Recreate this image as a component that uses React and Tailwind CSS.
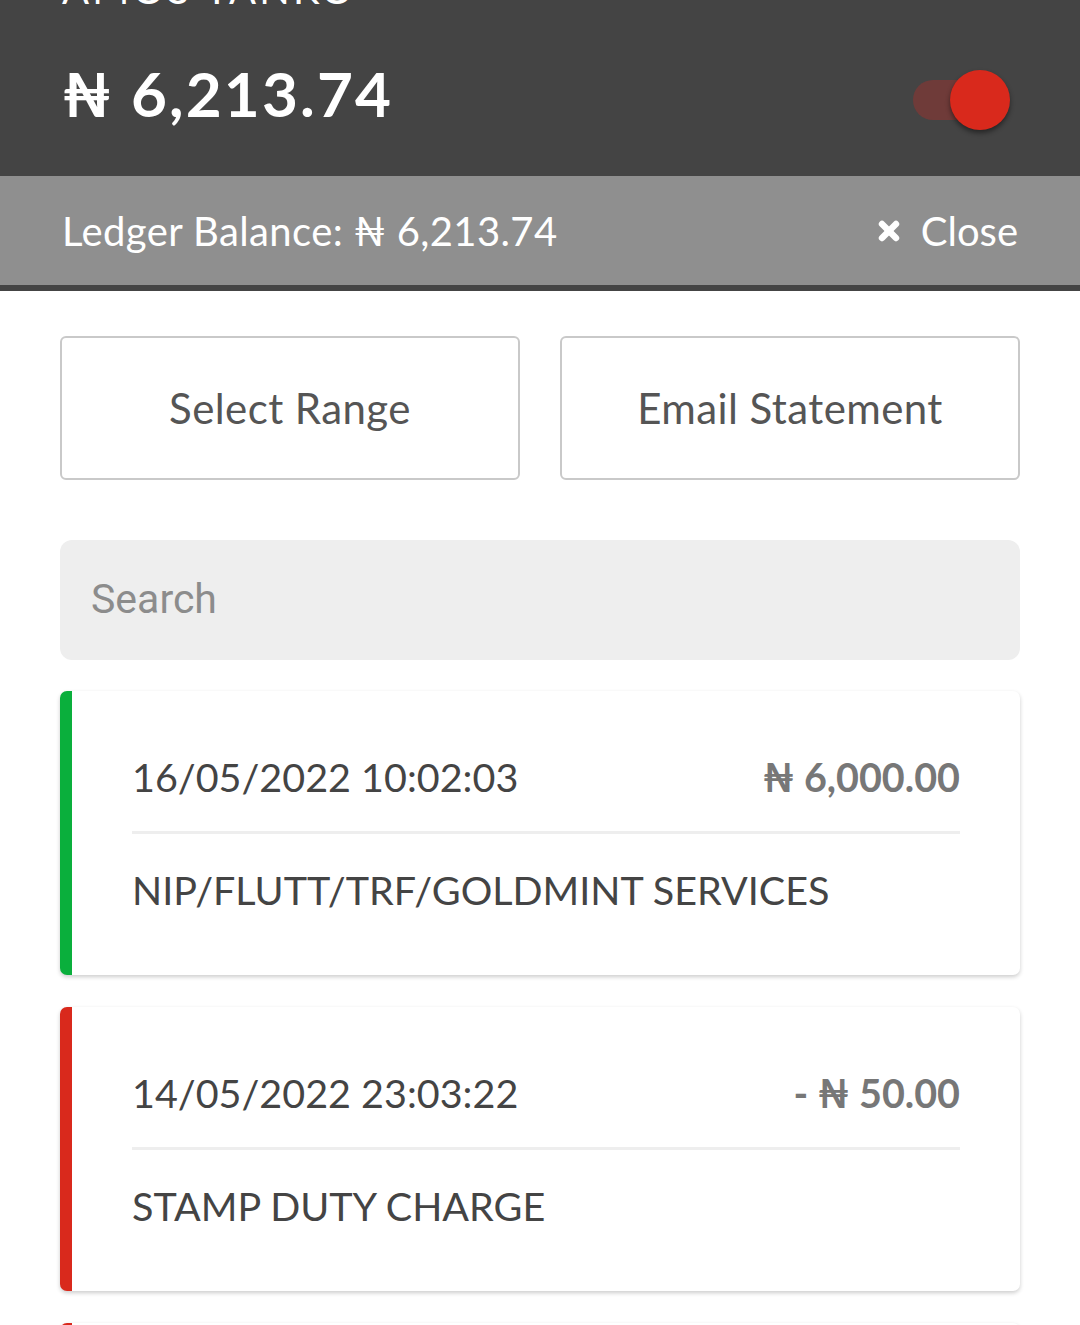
import { X } from 'lucide-react';

const transactions = [
  { id: 1, date: '16/05/2022 10:02:03', amount: '₦ 6,000.00', desc: 'NIP/FLUTT/TRF/GOLDMINT SERVICES', credit: true },
  { id: 2, date: '14/05/2022 23:03:22', amount: '- ₦ 50.00', desc: 'STAMP DUTY CHARGE', credit: false },
  { id: 3, date: '14/05/2022 23:03:22', amount: '- ₦ 50.00', desc: 'TRANSFER CHARGE', credit: false },
];

function Toggle() {
  return (
    <div className="relative w-[97px] h-[62px] flex items-center">
      <div className="w-[72px] h-[40px] rounded-full bg-[#6f3b39]" />
      <div className="absolute right-0 top-[1px] w-[60px] h-[60px] rounded-full bg-[#d9291c] shadow-[0_3px_5px_rgba(0,0,0,0.45)]" />
    </div>
  );
}

export default function App() {
  return (
    <div className="min-h-screen bg-white font-['Lato','Noto_Sans','DejaVu_Sans',sans-serif] overflow-hidden">
      <div className="bg-[#444444] h-[176px] px-[62px] flex flex-col">
        <div className="-mt-[31px] h-[40px] leading-[40px] text-[40px] text-white tracking-[0.08em]">AMOS TANKO</div>
        <div className="flex items-center justify-between mt-[46px]">
          <div className="text-white font-bold text-[62px] leading-[62px] tracking-[0.035em]">₦ 6,213.74</div>
          <div className="mr-[8px] mt-[14px]"><Toggle /></div>
        </div>
      </div>
      <div className="bg-[#8f8f8f] h-[115px] border-b-[6px] border-[#444444] px-[62px] flex items-center justify-between text-white text-[40px]">
        <span className="tracking-[0.01em]">Ledger Balance: ₦ 6,213.74</span>
        <span className="flex items-center gap-[18px]">
          <X className="w-[28px] h-[28px]" strokeWidth={5.5} />
          Close
        </span>
      </div>
      <div className="px-[60px] pt-[45px]">
        <div className="grid grid-cols-2 gap-[40px]">
          <button className="h-[144px] border-2 border-[#c9c9c9] rounded-[6px] text-[42px] tracking-[0.01em] text-[#555555]">Select Range</button>
          <button className="h-[144px] border-2 border-[#c9c9c9] rounded-[6px] text-[42px] tracking-[0.01em] text-[#555555]">Email Statement</button>
        </div>
        <div className="mt-[60px] h-[120px] rounded-[12px] bg-[#eeeeee] px-[31px] flex items-center font-['Roboto',sans-serif] text-[41px] text-[#8c8c8c]">Search</div>
        <div className="mt-[31px] flex flex-col gap-[32px]">
          {transactions.map(t => (
            <div key={t.id} className={`h-[284px] bg-white rounded-[7px] border-l-[12px] ${t.credit ? 'border-[#0aaf3c]' : 'border-[#d9291c]'} shadow-[0_2px_4px_rgba(0,0,0,0.2)] px-[60px] pt-[56px]`}>
              <div className="h-[60px] flex items-center justify-between text-[39.5px]">
                <span className="text-[#444444]">{t.date}</span>
                <span className="text-[#777777] font-bold">{t.amount}</span>
              </div>
              <div className="mt-[24px] h-[3px] bg-[#eeeeee]" />
              <div className="mt-[26px] h-[60px] flex items-center text-[39.5px] text-[#444444]">{t.desc}</div>
            </div>
          ))}
        </div>
      </div>
    </div>
  );
}
